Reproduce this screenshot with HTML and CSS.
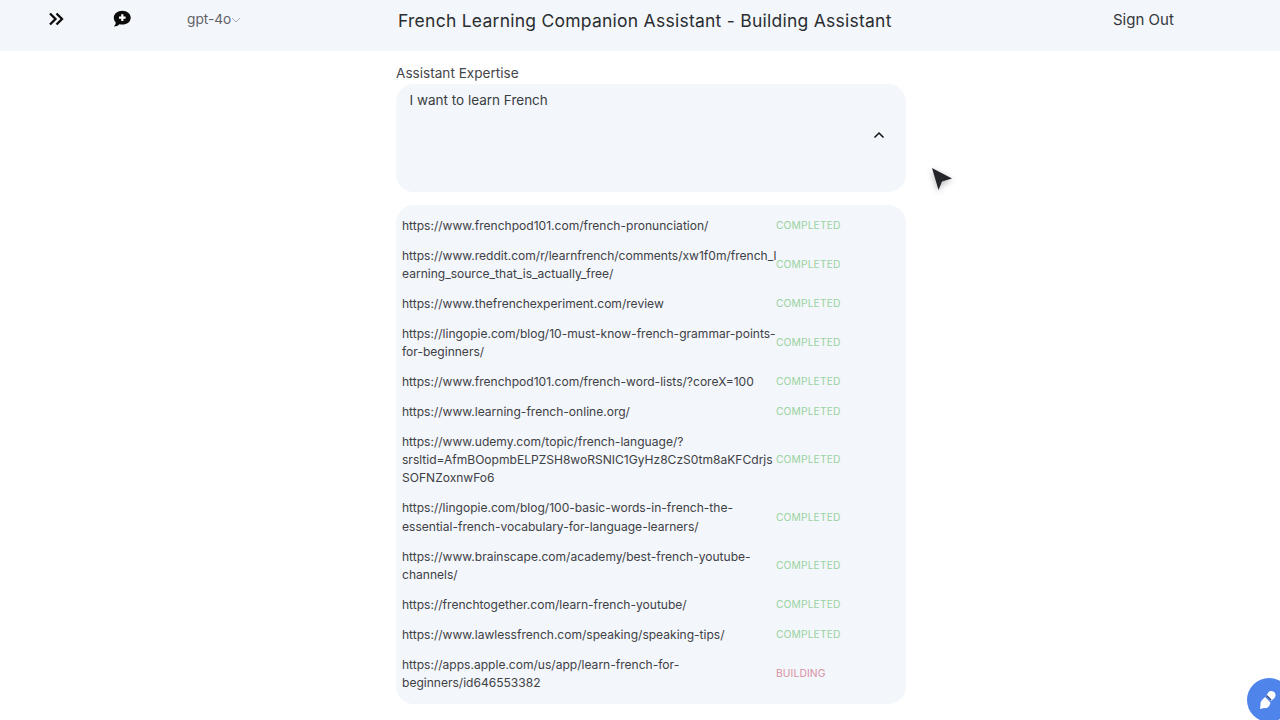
FILE: index.html
```html
<!DOCTYPE html>
<html lang="en">
<head>
<meta charset="utf-8">
<title>French Learning Companion Assistant</title>
<link rel="stylesheet" href="styles.css">
</head>
<body>
<header class="topbar">
  <div class="left-tools">
    <svg class="icon-expand" viewBox="0 0 16 14" width="16" height="14"><path d="M2 1.500 7.500 7 2 12.500M8.500 1.500 14 7 8.500 12.500" fill="none" stroke="#0b0b0b" stroke-width="2.300"/></svg>
    <svg class="icon-chat" viewBox="0 0 20 18" width="20" height="18"><path d="M10.300.8c4.700 0 8.400 3 8.400 6.900s-3.700 6.900-8.400 6.900c-1 0-2-.1-2.900-.4-1.300 1.300-3.300 2.300-5.500 2.300 1-1 1.700-2.200 1.900-3.900C2.800 11.400 1.800 9.600 1.800 7.700 1.800 3.800 5.600.8 10.300.8Z" fill="#0b0b0b"/><path d="M10.300 4.300v6.600M7 7.600h6.600" stroke="#fff" stroke-width="2.200"/></svg>
    <div class="model">gpt-4o<svg viewBox="0 0 10 6" width="10" height="6"><path d="M1 1l4 4 4-4" fill="none" stroke="#a9adb3" stroke-width="1"/></svg></div>
  </div>
  <h1 class="title">French Learning Companion Assistant - Building Assistant</h1>
  <div class="signout">Sign Out</div>
</header>
<main class="content">
  <label class="field-label">Assistant Expertise</label>
  <div class="expertise">
    <span>I want to learn French</span>
    <svg class="caret" viewBox="0 0 12 8" width="12" height="8"><path d="M1.500 6.500 6 2l4.500 4.500" fill="none" stroke="#111" stroke-width="1.500"/></svg>
  </div>
  <ul class="sources">
    <li class="row"><span class="url">https://www.frenchpod101.com/french-pronunciation/</span><span class="status done">COMPLETED</span></li>
    <li class="row"><span class="url">https://www.reddit.com/r/learnfrench/comments/xw1f0m/french_learning_source_that_is_actually_free/</span><span class="status done">COMPLETED</span></li>
    <li class="row"><span class="url">https://www.thefrenchexperiment.com/review</span><span class="status done">COMPLETED</span></li>
    <li class="row"><span class="url">https://lingopie.com/blog/10-must-know-french-grammar-points-for-beginners/</span><span class="status done">COMPLETED</span></li>
    <li class="row"><span class="url">https://www.frenchpod101.com/french-word-lists/?coreX=100</span><span class="status done">COMPLETED</span></li>
    <li class="row"><span class="url">https://www.learning-french-online.org/</span><span class="status done">COMPLETED</span></li>
    <li class="row"><span class="url">https://www.udemy.com/topic/french-language/?srsltid=AfmBOopmbELPZSH8woRSNIC1GyHz8CzS0tm8aKFCdrjsSOFNZoxnwFo6</span><span class="status done">COMPLETED</span></li>
    <li class="row"><span class="url">https://lingopie.com/blog/100-basic-words-in-french-the-essential-french-vocabulary-for-language-learners/</span><span class="status done">COMPLETED</span></li>
    <li class="row"><span class="url">https://www.brainscape.com/academy/best-french-youtube-channels/</span><span class="status done">COMPLETED</span></li>
    <li class="row"><span class="url">https://frenchtogether.com/learn-french-youtube/</span><span class="status done">COMPLETED</span></li>
    <li class="row"><span class="url">https://www.lawlessfrench.com/speaking/speaking-tips/</span><span class="status done">COMPLETED</span></li>
    <li class="row"><span class="url">https://apps.apple.com/us/app/learn-french-for-beginners/id646553382</span><span class="status building">BUILDING</span></li>
  </ul>
</main>
<svg class="cursor" viewBox="0 0 24 26" width="24" height="26"><path d="M2 2 22 12.500 12 15.500 8.500 24Z" fill="#24262b"/></svg>
<div class="fab"><svg viewBox="0 0 20 20" width="20" height="20"><path d="M11 1.500c2-1.200 5-.5 6 1.500s.5 4-1 5.500L13 11 8 6Z" fill="#fff"/><path d="M7 7l5.500 5.500-1 3c-.8 2-3.500 3-5.500 2.500L2 19l.5-4c-.3-2 .5-4 2-5.500Z" fill="#fff"/><path d="M8.500 5.500 13 10" stroke="#2f4f8f" stroke-width="1.600"/></svg></div>
</body>
</html>
```
FILE: styles.css
```css
* { box-sizing: border-box; }
html, body { margin: 0; padding: 0; height: 720px; overflow: hidden; }
body { background: #fff; color: #26282c; font-family: Inter, "Liberation Sans", sans-serif; position: relative; }

.topbar { height: 51px; background: #f3f6fa; display: flex; align-items: flex-start; padding-left: 48px; }
.left-tools { display: flex; align-items: center; width: 350px; height: 38px; flex: none; }
.icon-expand { flex: none; margin-right: 48px; }
.icon-chat { flex: none; margin-right: 55px; }
.model { display: flex; align-items: center; font-size: 13.7px; color: #5f6268; }
.model svg { margin-top: 2px; }
.title { margin: 10px 0 0; width: 494px; flex: none; font-size: 17.5px; line-height: 22px; font-weight: 400; letter-spacing: 0.25px; color: #2a2d31; white-space: nowrap; }
.signout { margin: 9px 0 0 221px; font-size: 15px; line-height: 21px; color: #33363a; white-space: nowrap; }

.content { width: 510px; margin-left: 396px; padding-top: 12px; display: flex; flex-direction: column; }
.field-label { font-size: 13.6px; line-height: 21px; color: #43464b; }
.expertise { height: 108px; background: #f3f6fa; border-radius: 18px; padding: 6px 13.5px; font-size: 13.5px; line-height: 20px; color: #3a3d42; position: relative; }
.caret { position: absolute; right: 21px; top: 47px; }

.sources { list-style: none; margin: 13px 0 0; padding: 5.8px 6px 7px; background: #f3f6fa; border-radius: 18px; height: 499px; }
.row { display: flex; align-items: center; padding: 6px 0; }
.url { width: 377px; margin-right: -3px; flex: none; font-size: 12.05px; line-height: 18.06px; color: #3e4146; overflow-wrap: anywhere; }
.status { font-size: 10.3px; line-height: 14px; padding-bottom: 2px; letter-spacing: 0.1px; }
.done { color: #9bd3a2; }
.building { color: #d98fa3; }

.cursor { position: absolute; left: 930px; top: 166px; filter: drop-shadow(0 2px 3px rgba(0,0,0,.3)); }
.fab { position: absolute; left: 1247px; top: 678px; width: 44px; height: 44px; border-radius: 50%; background: #4f84ea; display: flex; align-items: center; padding-left: 11px; }
```
